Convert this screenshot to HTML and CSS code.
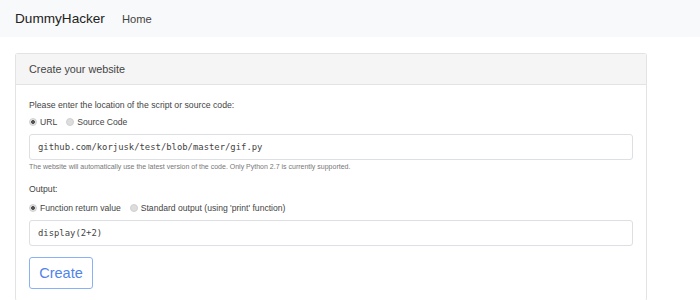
FILE: index.html
```
<!DOCTYPE html>
<html lang="en">
<head>
    <meta charset="UTF-8">
    <title>DummyHacker</title>
    <link rel="stylesheet" href="styles.css">
</head>
<body>
    <nav class="navbar">
        <a href="#" class="brand">DummyHacker</a>
        <a href="#" class="nav-link">Home</a>
    </nav>

    <div class="container">
        <div class="card">
            <div class="card-header">Create your website</div>
            <div class="card-body">
                <div class="label">Please enter the location of the script or source code:</div>
                <div class="radios">
                    <label><span class="radio checked"></span>URL</label>
                    <label><span class="radio"></span>Source Code</label>
                </div>
                <div class="input">github.com/korjusk/test/blob/master/gif.py</div>
                <div class="help">The website will automatically use the latest version of the code. Only Python 2.7 is currently supported.</div>

                <div class="label output-label">Output:</div>
                <div class="radios output-radios">
                    <label><span class="radio checked"></span>Function return value</label>
                    <label><span class="radio"></span>Standard output (using 'print' function)</label>
                </div>
                <div class="input">display(2+2)</div>

                <button class="btn">Create</button>
            </div>
        </div>
    </div>
</body>
</html>
```

FILE: styles.css
```
* {
    margin: 0;
    padding: 0;
    box-sizing: border-box;
}

body {
    font-family: "Liberation Sans", Arial, sans-serif;
    color: #333;
    background: white;
}

.navbar {
    height: 37px;
    background: #f8f9fa;
    display: flex;
    align-items: center;
    padding: 0 15px;
    gap: 17px;
}

.brand {
    font-size: 13.6px;
    color: #222;
    text-decoration: none;
}

.nav-link {
    font-size: 11.2px;
    color: #444;
    text-decoration: none;
}

.container {
    padding: 16px 0 0 15px;
    width: 647px;
}

.card {
    border: 1px solid #e3e3e3;
    border-radius: 3px;
    border-bottom: none;
}

.card-header {
    background: #f5f5f5;
    border-bottom: 1px solid #e3e3e3;
    height: 31px;
    padding: 0 13px;
    display: flex;
    align-items: center;
    font-size: 10.8px;
    color: #444;
}

.card-body {
    padding: 15px 13px 12px;
}

.label {
    font-size: 8.7px;
    line-height: 10px;
    color: #444;
}

.output-label {
    margin-top: 13px;
}

.radios {
    display: flex;
    gap: 9px;
    margin: 7px 0 7px;
    font-size: 8.6px;
    line-height: 10px;
    color: #444;
}

.output-radios {
    margin: 9px 0 7px;
}

.radios label {
    display: flex;
    align-items: center;
    gap: 3px;
}

.radio {
    width: 8px;
    height: 8px;
    border-radius: 50%;
    background: #ddd;
    border: 1px solid #d0d0d0;
    display: inline-block;
}

.radio.checked {
    background: radial-gradient(circle, #555 0 1.6px, #e0e0e0 2.2px);
}

.input {
    height: 26px;
    border: 1px solid #dcdfe3;
    border-radius: 3px;
    padding: 0 8px;
    display: flex;
    align-items: center;
    font-family: "DejaVu Sans Mono", monospace;
    font-size: 8.9px;
    color: #444;
}

.help {
    font-size: 7px;
    line-height: 8px;
    color: #777;
    margin-top: 3px;
}

.btn {
    display: block;
    margin-top: 11px;
    width: 64px;
    height: 32px;
    border: 1px solid #8ab0f5;
    border-radius: 3px;
    background: white;
    color: #4f84ea;
    font-family: "Liberation Sans", Arial, sans-serif;
    font-size: 14.5px;
}
```
